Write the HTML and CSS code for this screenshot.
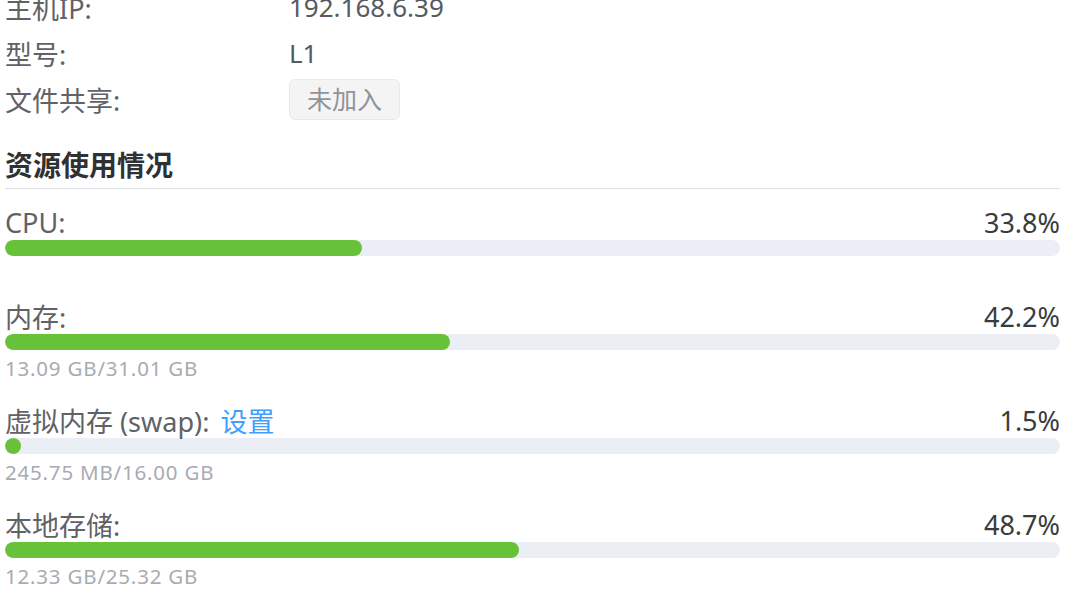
FILE: index.html
```html
<!DOCTYPE html>
<html lang="zh-CN">
<head>
<meta charset="utf-8">
<title>设备信息</title>
<link rel="stylesheet" href="styles.css">
</head>
<body>
<div class="page">
  <div class="info">
    <div class="info-row">
      <span class="info-label">主机IP:</span>
      <span class="info-value">192.168.6.39</span>
    </div>
    <div class="info-row">
      <span class="info-label">型号:</span>
      <span class="info-value">L1</span>
    </div>
    <div class="info-row">
      <span class="info-label">文件共享:</span>
      <span class="tag">未加入</span>
    </div>
  </div>

  <h2 class="section-title">资源使用情况</h2>

  <div class="usage-list">
    <div class="usage usage-compact">
      <div class="usage-head">
        <span class="usage-label">CPU:</span>
        <span class="usage-pct">33.8%</span>
      </div>
      <div class="bar"><div class="bar-fill" style="width:33.8%"></div></div>
    </div>

    <div class="usage">
      <div class="usage-head">
        <span class="usage-label">内存:</span>
        <span class="usage-pct">42.2%</span>
      </div>
      <div class="bar"><div class="bar-fill" style="width:42.2%"></div></div>
      <div class="usage-detail">13.09 GB/31.01 GB</div>
    </div>

    <div class="usage">
      <div class="usage-head">
        <span class="usage-label">虚拟内存 (swap): <a class="link" href="#">设置</a></span>
        <span class="usage-pct">1.5%</span>
      </div>
      <div class="bar"><div class="bar-fill" style="width:1.5%"></div></div>
      <div class="usage-detail">245.75 MB/16.00 GB</div>
    </div>

    <div class="usage">
      <div class="usage-head">
        <span class="usage-label">本地存储:</span>
        <span class="usage-pct">48.7%</span>
      </div>
      <div class="bar"><div class="bar-fill" style="width:48.7%"></div></div>
      <div class="usage-detail">12.33 GB/25.32 GB</div>
    </div>
  </div>
</div>
</body>
</html>
```

FILE: styles.css
```css
html, body {
  margin: 0;
  padding: 0;
  background: #ffffff;
  overflow: hidden;
}

body {
  font-family: "Noto Sans", "Noto Sans CJK SC", sans-serif;
  color: #606266;
}

.page {
  width: 1055px;
  padding-left: 5px;
}

.info {
  margin-top: -16px;
  display: flex;
  flex-direction: column;
}

.info-row {
  display: flex;
  align-items: center;
  min-height: 46px;
  font-size: 26px;
}

.info-label {
  width: 284px;
  flex: none;
  font-size: 27px;
  color: #606266;
}

.info-value {
  color: #555a61;
}

.tag {
  display: inline-block;
  margin: 3px 0;
  padding: 0 17px;
  height: 39px;
  line-height: 39px;
  font-size: 25px;
  color: #909399;
  background: #f4f4f5;
  border: 1px solid #e9e9eb;
  border-radius: 6px;
}

.section-title {
  margin: 24px 0 0 0;
  padding-bottom: 5px;
  font-size: 28px;
  line-height: 36px;
  font-weight: 700;
  color: #303133;
  border-bottom: 1px solid #dcdfe6;
}

.usage-list {
  margin-top: 15px;
  display: flex;
  flex-direction: column;
  gap: 22px;
}

.usage-compact {
  margin-bottom: 20px;
}

.usage-head {
  display: flex;
  justify-content: space-between;
  align-items: center;
  height: 36px;
  font-size: 27px;
}

.usage-label {
  color: #606266;
}

.usage-pct {
  color: #3a3b3d;
}

.link {
  color: #409eff;
  text-decoration: none;
  margin-left: 4px;
}

.bar {
  height: 16px;
  border-radius: 8px;
  background: #ebeef5;
  overflow: hidden;
}

.bar-fill {
  height: 100%;
  min-width: 16px;
  border-radius: 8px;
  background: #67c23a;
}

.usage-detail {
  margin-top: 6px;
  line-height: 24px;
  font-size: 20.5px;
  letter-spacing: 0.8px;
  color: #a8abb2;
}
```
